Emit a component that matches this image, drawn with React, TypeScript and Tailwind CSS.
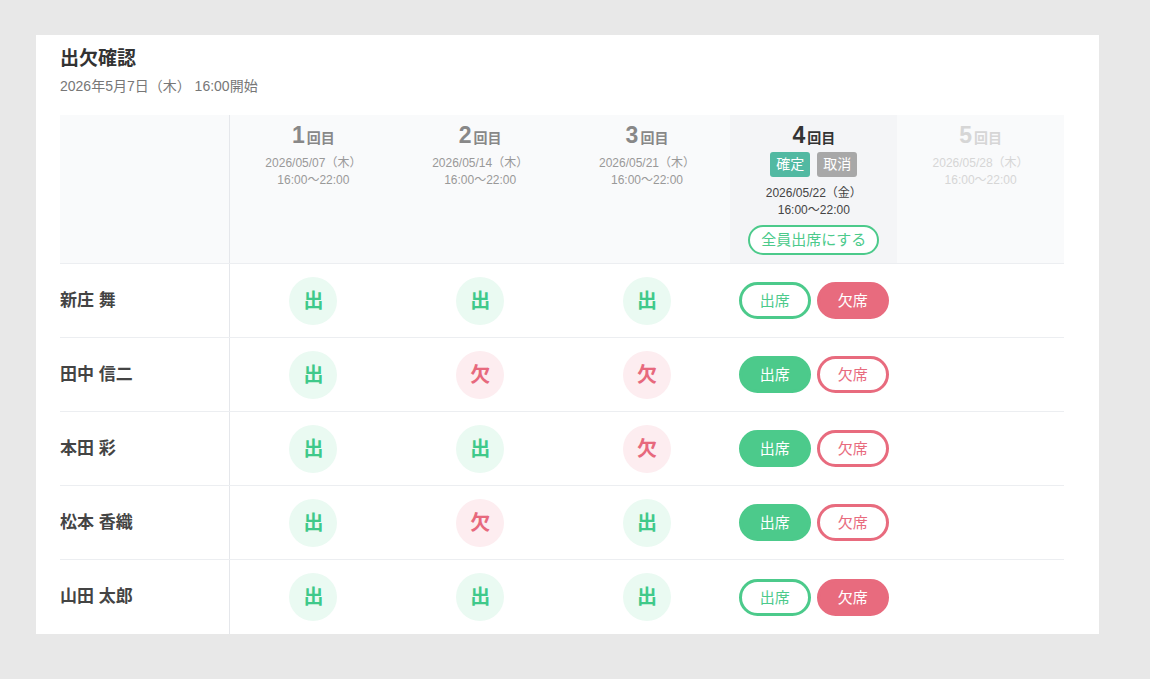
import React from 'react'

type Mark = 'in' | 'out'

type Member = {
  name: string
  past: Mark[]
  current: Mark
}

const sessions = [
  { no: 1, date: '2026/05/07（木）', time: '16:00〜22:00', state: 'past' },
  { no: 2, date: '2026/05/14（木）', time: '16:00〜22:00', state: 'past' },
  { no: 3, date: '2026/05/21（木）', time: '16:00〜22:00', state: 'past' },
  { no: 4, date: '2026/05/22（金）', time: '16:00〜22:00', state: 'current' },
  { no: 5, date: '2026/05/28（木）', time: '16:00〜22:00', state: 'future' },
] as const

const members: Member[] = [
  { name: '新庄 舞', past: ['in', 'in', 'in'], current: 'out' },
  { name: '田中 信二', past: ['in', 'out', 'out'], current: 'in' },
  { name: '本田 彩', past: ['in', 'in', 'out'], current: 'in' },
  { name: '松本 香織', past: ['in', 'out', 'in'], current: 'in' },
  { name: '山田 太郎', past: ['in', 'in', 'in'], current: 'out' },
]

const font = { fontFamily: '"Liberation Sans", "Noto Sans CJK JP", sans-serif' }

function MarkBadge({ mark }: { mark: Mark }) {
  return mark === 'in' ? (
    <div className="w-12 h-12 rounded-full bg-[#eafaf2] text-[#3fc98a] text-[20px] font-bold flex items-center justify-center">
      出
    </div>
  ) : (
    <div className="w-12 h-12 rounded-full bg-[#fdedf0] text-[#e7697d] text-[20px] font-bold flex items-center justify-center">
      欠
    </div>
  )
}

function AttendToggle({ value }: { value: Mark }) {
  return (
    <div className="flex items-center gap-[6px]">
      <button
        className={`w-[72px] h-[37px] rounded-full border-[3px] border-[#4cca8b] text-[15px] leading-none ${
          value === 'in' ? 'bg-[#4cca8b] text-white' : 'bg-white text-[#4cca8b]'
        }`}
      >
        出席
      </button>
      <button
        className={`w-[72px] h-[37px] rounded-full border-[3px] border-[#e86b7e] text-[15px] leading-none ${
          value === 'out' ? 'bg-[#e86b7e] text-white' : 'bg-white text-[#e86b7e]'
        }`}
      >
        欠席
      </button>
    </div>
  )
}

function SessionHeader({ s }: { s: (typeof sessions)[number] }) {
  const numColor =
    s.state === 'current' ? 'text-[#333]' : s.state === 'future' ? 'text-[#d6d6d6]' : 'text-[#888]'
  const dateColor =
    s.state === 'current' ? 'text-[#444]' : s.state === 'future' ? 'text-[#d6d6d6]' : 'text-[#999]'

  return (
    <div
      className={`flex flex-col items-center pt-[8px] ${
        s.state === 'current' ? 'bg-[#f4f5f7]' : 'bg-[#f9fafb]'
      }`}
    >
      <div className={`flex items-baseline font-bold ${numColor}`}>
        <span className="text-[23px] leading-[25px]">{s.no}</span>
        <span className="text-[14px] ml-[2px]">回目</span>
      </div>

      {s.state === 'current' && (
        <div className="flex gap-[7px] mt-[3px]">
          <button className="h-[25px] px-[6px] rounded-[3px] bg-[#52b9a2] text-white text-[14px]">確定</button>
          <button className="h-[25px] px-[6px] rounded-[3px] bg-[#a8a8a8] text-white text-[14px]">取消</button>
        </div>
      )}

      <div className={`text-[12px] leading-[17px] text-center ${dateColor} ${s.state === 'current' ? 'mt-[8px]' : 'mt-[6px]'}`}>
        <div>{s.date}</div>
        <div>{s.time}</div>
      </div>

      {s.state === 'current' && (
        <button className="mt-[6px] h-[30px] px-[11px] rounded-full border-2 border-[#4cca8b] bg-white text-[#4cca8b] text-[15px]">
          全員出席にする
        </button>
      )}
    </div>
  )
}

export default function App() {
  return (
    <div className="min-h-screen bg-[#e8e8e8] pt-[35px] pl-[36px]" style={font}>
      <div className="w-[1063px] bg-white pl-[24px] pt-[10px]">
        <h1 className="text-[19px] leading-[27px] font-bold text-[#333]">出欠確認</h1>
        <p className="mt-[4px] text-[14px] leading-[20px] text-[#777]">2026年5月7日（木） 16:00開始</p>

        <div className="mt-[19px] w-[1004px]">
          {/* ヘッダー行 */}
          <div className="grid grid-cols-[170px_repeat(5,1fr)] h-[149px] border-b border-[#eceef1]">
            <div className="bg-[#f9fafb] border-r border-[#e5e7eb]" />
            {sessions.map((s) => (
              <SessionHeader key={s.no} s={s} />
            ))}
          </div>

          {/* メンバー行 */}
          {members.map((m, i) => (
            <div
              key={m.name}
              className={`grid grid-cols-[170px_repeat(5,1fr)] h-[74px] ${
                i < members.length - 1 ? 'border-b border-[#eceef1]' : ''
              }`}
            >
              <div className="flex items-center border-r border-[#e5e7eb] text-[17px] font-bold text-[#444]">
                {m.name}
              </div>
              {m.past.map((p, j) => (
                <div key={j} className="flex items-center justify-center">
                  <MarkBadge mark={p} />
                </div>
              ))}
              <div className="flex items-center justify-center">
                <AttendToggle value={m.current} />
              </div>
              <div />
            </div>
          ))}
        </div>
      </div>
    </div>
  )
}
